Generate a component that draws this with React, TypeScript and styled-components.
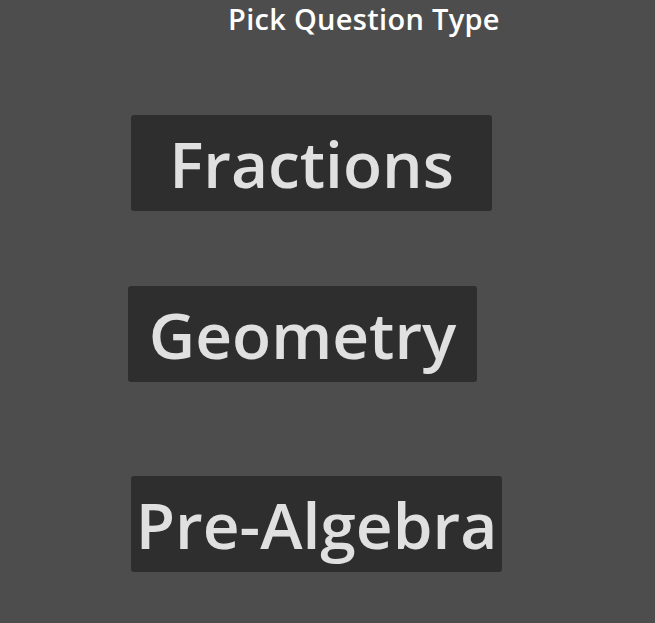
import React from "react";
import styled, { createGlobalStyle } from "styled-components";

const Global = createGlobalStyle`
  html, body {
    margin: 0;
    padding: 0;
    background: #4d4d4d;
  }
  body {
    font-family: "Open Sans", "Noto Sans", sans-serif;
  }
`;

const Page = styled.div`
  width: 655px;
  height: 623px;
  background: #4d4d4d;
  display: flex;
  flex-direction: column;
  align-items: flex-start;
  overflow: hidden;
`;

const Title = styled.h1`
  margin: 0 0 0 228px;
  font-family: "Open Sans", sans-serif;
  font-size: 29px;
  font-weight: 600;
  letter-spacing: 0.3px;
  line-height: 37px;
  color: #ffffff;
  white-space: nowrap;
`;

const ChoiceButton = styled.button<{ $w: number; $left: number; $top: number }>`
  margin: ${(p) => p.$top}px 0 0 ${(p) => p.$left}px;
  width: ${(p) => p.$w}px;
  height: 96px;
  padding: 0;
  border: none;
  border-radius: 3px;
  background: #2e2e2e;
  color: #e0e0e0;
  font-family: "Open Sans", sans-serif;
  font-size: 64px;
  font-weight: 600;
  display: flex;
  align-items: center;
  justify-content: center;
  white-space: nowrap;
  cursor: pointer;
`;

const choices = [
  { label: "Fractions", w: 361, left: 131, top: 78 },
  { label: "Geometry", w: 349, left: 128, top: 75 },
  { label: "Pre-Algebra", w: 371, left: 131, top: 94 },
];

export default function App() {
  return (
    <>
      <Global />
      <Page>
        <Title>Pick Question Type</Title>
        {choices.map((c) => (
          <ChoiceButton key={c.label} $w={c.w} $left={c.left} $top={c.top}>
            {c.label}
          </ChoiceButton>
        ))}
      </Page>
    </>
  );
}
